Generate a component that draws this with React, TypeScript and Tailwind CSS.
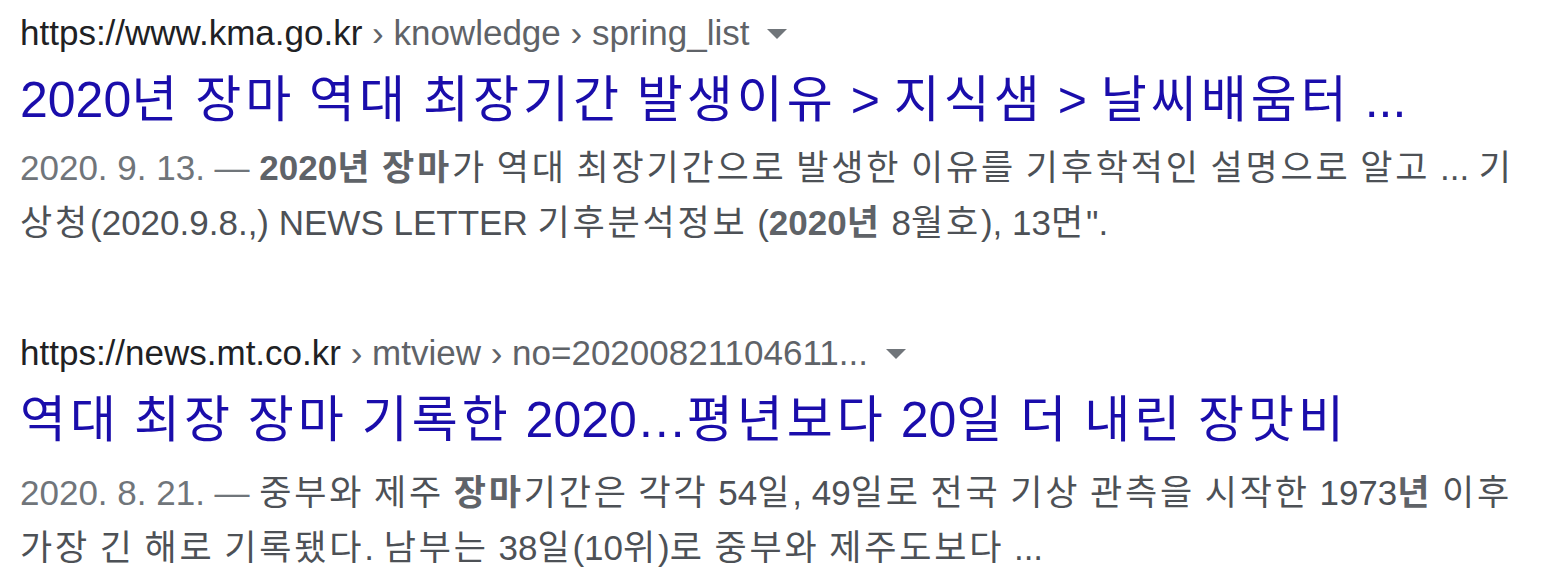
import type { ReactNode } from 'react';

const font = { fontFamily: '"Liberation Sans", "Noto Sans CJK KR", Arial, sans-serif' };

// Hangul in the shot is wider than Noto's, so pad the Korean runs a little
function K({ children }: { children: string }) {
  const parts = children.split(/([\uac00-\ud7a3]+)/);
  return (
    <>
      {parts.map((p, i) =>
        /[\uac00-\ud7a3]/.test(p) ? (
          <span key={i} className="tracking-[0.08em]">{p}</span>
        ) : (
          p
        ),
      )}
    </>
  );
}

function Arrow() {
  return (
    <svg className="inline-block align-middle ml-[18px] w-[20px] h-[10px] -mt-[4px]" viewBox="0 0 20 10">
      <polygon points="0,0 20,0 10,10" fill="#70757a" />
    </svg>
  );
}

function Crumb({ domain, path }: { domain: string; path: string }) {
  return (
    <div className="h-[45px] leading-[45px] text-[35px] whitespace-nowrap">
      <span className="text-[#202124]">{domain}</span>
      <span className="text-[#5f6368]">{' › ' + path}</span>
      <Arrow />
    </div>
  );
}

function Bold({ children }: { children: ReactNode }) {
  return <b className="text-[#5f6368]">{children}</b>;
}

export default function App() {
  return (
    <div className="bg-white w-[1542px] h-[577px] overflow-hidden pl-[20px] pt-[10px]" style={font}>
      {/* result 1 */}
      <div>
        <Crumb domain="https://www.kma.go.kr" path="knowledge › spring_list" />
        <h3 className="mt-[23px] text-[50px] leading-[45px] text-[#1a0dab] whitespace-nowrap">
          <K>2020년 장마 역대 최장기간 발생이유 &gt; 지식샘 &gt; 날씨배움터 ...</K>
        </h3>
        <div className="mt-[17px] text-[35px] leading-[55px] text-[#4d5156] whitespace-nowrap">
          <div>
            <span className="text-[#70757a]">2020. 9. 13. — </span>
            <Bold><K>2020년 장마</K></Bold>
            <K>가 역대 최장기간으로 발생한 이유를 기후학적인 설명으로 알고 ... 기</K>
          </div>
          <div>
            <K>상청(2020.9.8.,) NEWS LETTER 기후분석정보 (</K>
            <Bold><K>2020년</K></Bold>
            <K> 8월호), 13면".</K>
          </div>
        </div>
      </div>

      {/* result 2 */}
      <div className="mt-[80px]">
        <Crumb domain="https://news.mt.co.kr" path="mtview › no=20200821104611..." />
        <h3 className="mt-[23px] text-[50px] leading-[45px] text-[#1a0dab] whitespace-nowrap">
          <K>역대 최장 장마 기록한 2020…평년보다 20일 더 내린 장맛비</K>
        </h3>
        <div className="mt-[22px] text-[35px] leading-[55px] text-[#4d5156] whitespace-nowrap">
          <div>
            <span className="text-[#70757a]">2020. 8. 21. — </span>
            <K>중부와 제주 </K>
            <Bold><K>장마</K></Bold>
            <K>기간은 각각 54일, 49일로 전국 기상 관측을 시작한 1973</K>
            <Bold><K>년</K></Bold>
            <K> 이후</K>
          </div>
          <div>
            <K>가장 긴 해로 기록됐다. 남부는 38일(10위)로 중부와 제주도보다 ...</K>
          </div>
        </div>
      </div>
    </div>
  );
}
